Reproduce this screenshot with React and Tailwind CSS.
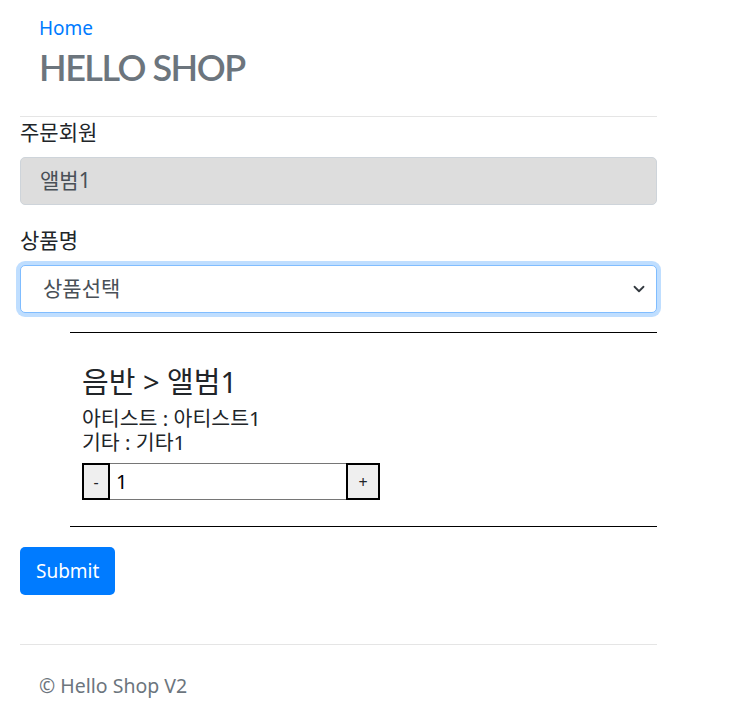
import { useState } from 'react';

const FONT = "font-['Noto_Sans','Noto_Sans_CJK_KR',sans-serif]";

const App = () => {
  const [count, setCount] = useState(1);

  return (
    <div className={`${FONT} w-[735px] min-h-[726px] bg-white text-[#212529] text-[21px]`}>
      <div className="w-[637px] ml-[20px]">
        {/* Header */}
        <div className="border-b border-[#e5e5e5] pt-[13px] pb-[25px]">
          <a className="block pl-[19px] text-[#007bff] text-[19px] leading-[30px]">Home</a>
          <h2 className="pl-[19px] font-['Lato','Noto_Sans',sans-serif] text-[36px] tracking-[-1.5px] leading-[48px] font-semibold text-[#6c757d]">
            HELLO SHOP
          </h2>
        </div>

        {/* Form */}
        <div>
          <label className="block leading-[30px] mb-[10px]">주문회원</label>
          <div className="h-[48px] rounded-[5px] border border-[#ced4da] bg-[#dddddd] pl-[19px] flex items-center text-[#495057]">
            앨범1
          </div>
        </div>
        <div className="mt-[20px]">
          <label className="block leading-[30px] mb-[10px]">상품명</label>
          <div className="h-[48px] rounded-[5px] border border-[#80bdff] shadow-[0_0_0_4px_rgba(0,123,255,0.25)] bg-white pl-[22px] pr-[10px] flex items-center justify-between text-[#495057]">
            <span>상품선택</span>
            <svg width="12" height="12" viewBox="0 0 16 16" className="mr-[1px]">
              <path d="M2 5l6 6 6-6" fill="none" stroke="#343a40" strokeWidth="2.4" strokeLinecap="round" strokeLinejoin="round" />
            </svg>
          </div>
        </div>

        {/* Selected item */}
        <div className="ml-[50px] mt-[19px] border-t border-b border-black pt-[34px] pb-[26px]">
          <div className="pl-[12px]">
            <h5 className="text-[29px] leading-[30px] font-normal">음반 &gt; 앨범1</h5>
            <p className="mt-[9px] text-[20.5px] leading-[24px]">
              아티스트 : 아티스트1
              <br />
              기타 : 기타1
            </p>
            <div className="flex mt-[9px] h-[37px]">
              <button
                className="w-[28px] border-2 border-black bg-[#efefef] text-[16px]"
                onClick={() => setCount(Math.max(1, count - 1))}
              >
                -
              </button>
              <input
                value={count}
                readOnly
                className="w-[236px] border border-[#767676] border-x-0 px-[6px] text-[20px] text-black outline-none"
              />
              <button
                className="w-[34px] border-2 border-black bg-[#efefef] text-[16px]"
                onClick={() => setCount(count + 1)}
              >
                +
              </button>
            </div>
          </div>
        </div>

        <button className="mt-[20px] h-[48px] px-[16px] rounded-[5px] bg-[#007bff] text-white text-[19px] leading-[30px]">
          Submit
        </button>

        {/* Footer */}
        <div className="mt-[49px] border-t border-[#e5e5e5] pt-[26px]">
          <p className="pl-[19px] text-[#6c757d] text-[19.5px] leading-[30px]">© Hello Shop V2</p>
        </div>
      </div>
    </div>
  );
};

export default App;
